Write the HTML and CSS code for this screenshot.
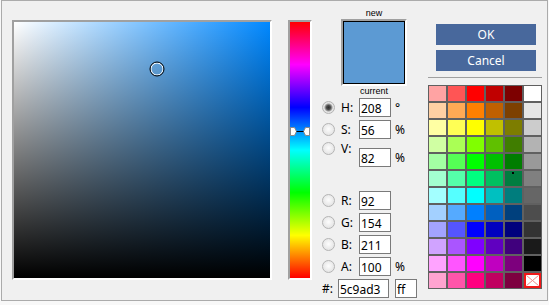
FILE: index.html
```html
<!DOCTYPE html>
<html lang="en">

<head>
    <meta charset="UTF-8">
    <title>Colour picker</title>
    <link rel="stylesheet" href="styles.css">
</head>

<body>
    <div class="dialog">
        <div class="field-box">
            <div class="field">
                <div class="cursor" style="left: 143px; top: 47px;"></div>
            </div>
        </div>

        <div class="hue-box">
            <div class="hue">
                <svg class="hue-marker" style="top: 105px;" width="20" height="9" viewBox="0 0 20 9">
                    <path d="M0.5 0.5H4.5L6.5 4.5L4.5 8.5H0.5Z" fill="#fff" stroke="#8a8a8a" />
                    <path d="M19.5 0.5H15.5L13.5 4.5L15.5 8.5H19.5Z" fill="#fff" stroke="#8a8a8a" />
                    <path d="M6.5 4.5H13.5" stroke="#000" />
                </svg>
            </div>
        </div>

        <div class="values">
            <div class="swatch-label first">new</div>
            <div class="swatch">
                <div class="swatch-fill"></div>
            </div>
            <div class="swatch-label current">current</div>

            <div class="row first">
                <span class="radio checked"></span><label>H:</label><input value="208"><span class="unit">°</span>
            </div>
            <div class="row">
                <span class="radio"></span><label>S:</label><input value="56"><span class="unit">%</span>
            </div>
            <div class="row v">
                <span class="radio"></span><label>V:</label><input value="82"><span class="unit">%</span>
            </div>

            <div class="row rgb">
                <span class="radio"></span><label>R:</label><input value="92">
            </div>
            <div class="row">
                <span class="radio"></span><label>G:</label><input value="154">
            </div>
            <div class="row">
                <span class="radio"></span><label>B:</label><input value="211">
            </div>
            <div class="row">
                <span class="radio"></span><label>A:</label><input value="100"><span class="unit">%</span>
            </div>
            <div class="row hex">
                <label>#:</label><input class="hex-input" value="5c9ad3"><input class="alpha-input" value="ff">
            </div>
        </div>

        <div class="side">
            <button class="btn">OK</button>
            <button class="btn cancel">Cancel</button>
            <div class="separator"></div>

            <div class="palette">
                <div style="background: #ffa3a3"></div>
                <div style="background: #ff5555"></div>
                <div style="background: #ff0000"></div>
                <div style="background: #c00000"></div>
                <div style="background: #7d0000"></div>
                <div style="background: #ffffff"></div>

                <div style="background: #ffd0a3"></div>
                <div style="background: #ffaa55"></div>
                <div style="background: #ff8000"></div>
                <div style="background: #c06000"></div>
                <div style="background: #7d4000"></div>
                <div style="background: #e6e6e6"></div>

                <div style="background: #ffffa3"></div>
                <div style="background: #ffff55"></div>
                <div style="background: #ffff00"></div>
                <div style="background: #c0c000"></div>
                <div style="background: #7d7d00"></div>
                <div style="background: #cccccc"></div>

                <div style="background: #d0ffa3"></div>
                <div style="background: #aaff55"></div>
                <div style="background: #80ff00"></div>
                <div style="background: #60c000"></div>
                <div style="background: #407d00"></div>
                <div style="background: #b3b3b3"></div>

                <div style="background: #a3ffa3"></div>
                <div style="background: #55ff55"></div>
                <div style="background: #00ff00"></div>
                <div style="background: #00c000"></div>
                <div style="background: #007d00"></div>
                <div style="background: #999999"></div>

                <div style="background: #a3ffd0"></div>
                <div style="background: #55ffaa"></div>
                <div style="background: #00ff80"></div>
                <div style="background: #00c060"></div>
                <div class="marked" style="background: #007d40"></div>
                <div style="background: #808080"></div>

                <div style="background: #a3ffff"></div>
                <div style="background: #55ffff"></div>
                <div style="background: #00ffff"></div>
                <div style="background: #00c0c0"></div>
                <div style="background: #007d7d"></div>
                <div style="background: #666666"></div>

                <div style="background: #a3d0ff"></div>
                <div style="background: #55aaff"></div>
                <div style="background: #0080ff"></div>
                <div style="background: #0060c0"></div>
                <div style="background: #00407d"></div>
                <div style="background: #4d4d4d"></div>

                <div style="background: #a3a3ff"></div>
                <div style="background: #5555ff"></div>
                <div style="background: #0000ff"></div>
                <div style="background: #0000c0"></div>
                <div style="background: #00007d"></div>
                <div style="background: #333333"></div>

                <div style="background: #d0a3ff"></div>
                <div style="background: #aa55ff"></div>
                <div style="background: #8000ff"></div>
                <div style="background: #6000c0"></div>
                <div style="background: #40007d"></div>
                <div style="background: #1a1a1a"></div>

                <div style="background: #ffa3ff"></div>
                <div style="background: #ff55ff"></div>
                <div style="background: #ff00ff"></div>
                <div style="background: #c000c0"></div>
                <div style="background: #7d007d"></div>
                <div style="background: #000000"></div>

                <div style="background: #ffa3d0"></div>
                <div style="background: #ff55aa"></div>
                <div style="background: #ff0080"></div>
                <div style="background: #c00060"></div>
                <div style="background: #7d0040"></div>
                <div class="none">
                    <svg width="17" height="15" viewBox="0 0 17 15">
                        <rect x="1" y="1" width="15" height="13" fill="#fff" stroke="#f01818" stroke-width="2" />
                        <path d="M2.5 2.5L14.5 12.5M14.5 2.5L2.5 12.5" stroke="#f08a8a" />
                    </svg>
                </div>
            </div>
        </div>
    </div>
</body>

</html>
```

FILE: styles.css
```css
* {
    box-sizing: border-box;
}

body {
    margin: 0;
    background-color: #f8f8f8;
    font-family: "Noto Sans", "Liberation Sans", sans-serif;
    font-size: 12px;
    color: #000;
}

.dialog {
    display: flex;
    align-items: flex-start;
    width: 547px;
    height: 301px;
    margin-left: 1px;
    border: 1px solid #ababab;
    background-color: #f0f0f0;
}

/* sunken boxes */
.field-box,
.hue-box,
.swatch {
    border: 2px solid;
    border-color: #a0a0a0 #fff #fff #a0a0a0;
}

.field-box {
    margin: 19px 0 0 10px;
}

.field {
    position: relative;
    width: 256px;
    height: 256px;
    background: linear-gradient(to top, #000, rgba(0, 0, 0, 0)), linear-gradient(to right, #fff, #0088ff);
}

.cursor {
    position: absolute;
    width: 15px;
    height: 15px;
    border: 1px solid #000;
    border-radius: 50%;
    box-shadow: inset 0 0 0 1px #fff;
    transform: translate(-50%, -50%);
}

.hue-box {
    margin: 19px 0 0 16px;
}

.hue {
    position: relative;
    width: 20px;
    height: 256px;
    background: linear-gradient(to bottom, #f00, #f0f, #00f, #0ff, #0f0, #ff0, #f00);
}

.hue-marker {
    position: absolute;
    left: 0;
    display: block;
}

.values {
    display: flex;
    flex-direction: column;
    width: 116px;
    flex: none;
}

.swatch-label {
    width: 66px;
    margin-left: 29px;
    font-family: "Liberation Sans", sans-serif;
    font-size: 9px;
    line-height: 12px;
    text-align: center;
}

.swatch-label.first {
    padding-top: 6px;
    height: 18px;
}

.swatch-label.current {
    margin-top: -1px;
}

.swatch {
    width: 66px;
    height: 67px;
    margin-left: 29px;
}

.swatch-fill {
    height: 100%;
    border: 1px solid #000;
    background-color: #5c9ad3;
}

.row {
    display: flex;
    align-items: center;
    height: 19px;
    margin-top: 3px;
    padding-left: 10px;
}

.row.first {
    margin-top: 1px;
}

.row.rgb {
    margin-top: 24px;
}

.row.v {
    align-items: flex-start;
    height: 25px;
}

.row.v label {
    margin-top: -2px;
}

.row.v input {
    margin-top: 6px;
}

.row.v .unit {
    margin-top: 7px;
}

.radio {
    flex: none;
    width: 13px;
    height: 13px;
    border: 1px solid #b4b4b4;
    border-radius: 50%;
    background: radial-gradient(circle at 50% 45%, #fdfdfd, #dcdcdc);
}

.radio.checked {
    background: radial-gradient(circle at 50% 50%, #2e2e2e 0, #4a4a4a 2px, #9c9c9c 3.5px, #e6e6e6 4.5px, #d8d8d8 100%);
}

label {
    width: 18px;
    margin-left: 6px;
}

input {
    width: 32px;
    height: 19px;
    padding: 1px 0 0 1px;
    border: 1px solid #7a7a7a;
    background-color: #fff;
    font-family: inherit;
    font-size: 12px;
    color: #000;
    outline: none;
}

.unit {
    margin-left: 4px;
}

.row.hex label {
    width: 16px;
    margin-left: 0;
}

.hex-input {
    width: 51px;
}

.alpha-input {
    width: 22px;
    margin-left: 6px;
}

.side {
    display: flex;
    flex-direction: column;
    width: 114px;
    flex: none;
}

.btn {
    width: 100px;
    height: 21px;
    margin: 23px 0 0 8px;
    padding: 0;
    border: none;
    background-color: #48689c;
    color: #fff;
    font-family: inherit;
    font-size: 12px;
    line-height: 21px;
}

.btn.cancel {
    margin-top: 5px;
}

.separator {
    height: 1px;
    margin-top: 6px;
    background-color: #a0a0a0;
}

.palette {
    display: grid;
    grid-template-columns: repeat(6, 17px);
    grid-auto-rows: 15px;
    gap: 2px;
    padding: 1px;
    margin-top: 7px;
    background-color: #606060;
}

.palette .marked {
    position: relative;
}

.palette .marked::after {
    content: "";
    position: absolute;
    left: 7px;
    top: 1px;
    width: 2px;
    height: 2px;
    background-color: #000;
}

.palette .none svg {
    display: block;
}
```
